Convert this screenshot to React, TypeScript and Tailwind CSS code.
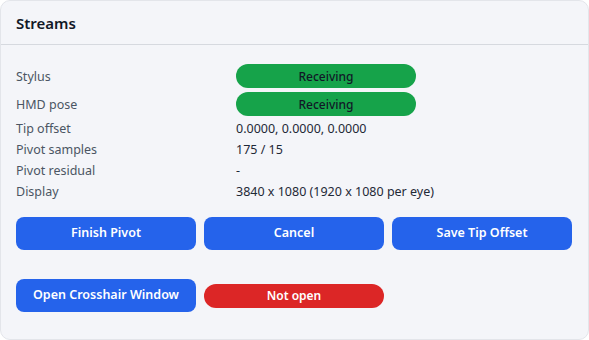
import React from "react";

const rows = [
  { label: "Tip offset", value: "0.0000, 0.0000, 0.0000" },
  { label: "Pivot samples", value: "175 / 15" },
  { label: "Pivot residual", value: "-" },
  { label: "Display", value: "3840 x 1080 (1920 x 1080 per eye)" },
];

const StatusPill = ({ text, tone }: { text: string; tone: "ok" | "bad" }) => (
  <div
    className={
      tone === "ok"
        ? "h-6 w-[180px] rounded-full bg-[#16a34a] flex items-center justify-center text-[12px] font-medium text-[#111827]"
        : "h-6 w-[180px] rounded-full bg-[#dc2626] flex items-center justify-center text-[12px] font-semibold text-white"
    }
  >
    {text}
  </div>
);

const Button = ({ children }: { children: React.ReactNode }) => (
  <button className="h-[33px] w-[180px] rounded-lg bg-[#2563eb] text-white text-[12.5px] font-semibold">
    {children}
  </button>
);

export default function App() {
  return (
    <div
      className="w-[589px] h-[340px] bg-white"
      style={{ fontFamily: '"Noto Sans", "Open Sans", sans-serif' }}
    >
      <div className="h-full rounded-[10px] border border-[#e3e5ea] bg-[#f4f5f9] flex flex-col">
        <div className="h-[44px] px-[15px] pt-[2px] flex items-center border-b border-[#d6d9df]">
          <h2 className="text-[15px] font-semibold text-[#111827]">Streams</h2>
        </div>

        <div className="px-[15px] pt-[19px]">
          <div className="grid grid-cols-[220px_1fr] gap-y-1 text-[12.5px] leading-[17px]">
            <div className="text-[#4b5563] flex items-center">Stylus</div>
            <StatusPill text="Receiving" tone="ok" />
            <div className="text-[#4b5563] flex items-center">HMD pose</div>
            <StatusPill text="Receiving" tone="ok" />
            {rows.map((r, i) => (
              <React.Fragment key={i}>
                <div className="text-[#4b5563]">{r.label}</div>
                <div className="text-[#1f2937]">{r.value}</div>
              </React.Fragment>
            ))}
          </div>

          <div className="mt-[17px] flex gap-2">
            <Button>Finish Pivot</Button>
            <Button>Cancel</Button>
            <Button>Save Tip Offset</Button>
          </div>

          <div className="mt-[29px] flex items-center gap-2">
            <Button>Open Crosshair Window</Button>
            <StatusPill text="Not open" tone="bad" />
          </div>
        </div>
      </div>
    </div>
  );
}
